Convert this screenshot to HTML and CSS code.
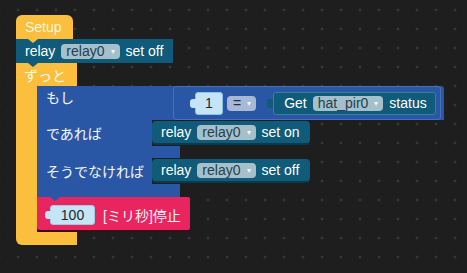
FILE: index.html
```html
<!DOCTYPE html>
<html lang="ja">
<head>
<meta charset="utf-8">
<link rel="stylesheet" href="styles.css">
</head>
<body>
<div class="workspace">
  <div class="stack">
    <div class="blk hat yellow">Setup</div>
    <div class="blk stmt teal top-relay"><span>relay</span><span class="dd">relay0<i>▾</i></span><span>set off</span></div>
    <div class="loop">
      <div class="loop-head yellow">ずっと</div>
      <div class="loop-body">
        <div class="spine yellow"></div>
        <div class="loop-inner">
          <div class="ifb">
            <div class="if-row1">
              <span class="lbl lbl-top">もし</span>
              <div class="cmp">
                <span class="num num-1">1</span>
                <span class="dd dd-blue">=<i>▾</i></span>
                <div class="get"><span>Get</span><span class="dd">hat_pir0<i>▾</i></span><span>status</span></div>
              </div>
            </div>
            <div class="if-row">
              <span class="lbl">であれば</span>
              <div class="blk stmt teal inner-relay"><span>relay</span><span class="dd">relay0<i>▾</i></span><span>set on</span></div>
            </div>
            <div class="if-bar"></div>
            <div class="if-row">
              <span class="lbl">そうでなければ</span>
              <div class="blk stmt teal inner-relay"><span>relay</span><span class="dd">relay0<i>▾</i></span><span>set off</span></div>
            </div>
            <div class="if-bar if-bar-last"></div>
          </div>
          <div class="blk pink wait"><span class="num num-100">100</span><span>[ミリ秒]停止</span></div>
        </div>
      </div>
      <div class="loop-foot yellow"></div>
    </div>
  </div>
</div>
</body>
</html>
```
FILE: styles.css
```css
html, body {
  margin: 0;
  padding: 0;
}
body {
  width: 467px;
  height: 273px;
  overflow: hidden;
  background-color: #1e1e1e;
  background-image: radial-gradient(circle, #505050 0.7px, transparent 1.3px);
  background-size: 19px 19px;
  background-position: 8.5px 0.5px;
  font-family: "Liberation Sans", "Noto Sans CJK JP", sans-serif;
  font-size: 14px;
  color: #fff;
}
.workspace {
  padding: 15px 0 0 16px;
}
.stack {
  display: flex;
  flex-direction: column;
  align-items: flex-start;
}
.yellow { background: #fbbe3d; }
.teal { background: #0f5b79; }
.pink { background: #e8255e; }

.blk {
  position: relative;
  display: flex;
  align-items: center;
  box-sizing: border-box;
  white-space: nowrap;
}
.hat {
  width: 57px;
  height: 24px;
  padding-left: 9px;
  border-radius: 6px 6px 0 0;
  color: #fff6dc;
}
.hat::after {
  content: "";
  position: absolute;
  left: 12px;
  bottom: -4px;
  border-left: 5px solid transparent;
  border-right: 5px solid transparent;
  border-top: 4px solid #fbbe3d;
  z-index: 2;
}
.stmt {
  gap: 6px;
}
.top-relay {
  height: 24px;
  padding: 0 10px 0 9px;
}
.top-relay::after {
  content: "";
  position: absolute;
  left: 12px;
  bottom: -4px;
  border-left: 5px solid transparent;
  border-right: 5px solid transparent;
  border-top: 4px solid #0f5b79;
  z-index: 2;
}
.dd {
  display: inline-flex;
  align-items: center;
  height: 15px;
  padding: 0 5px;
  gap: 6px;
  border-radius: 4px;
  background: #a6c0cb;
  color: #22414d;
  line-height: 15px;
}
.dd i {
  font-style: normal;
  font-size: 8px;
  color: #f2f6f8;
}
.dd-blue {
  background: #a9b8d4;
  color: #1f2e4a;
  padding: 0 5px 0 6px;
}

.loop {
  display: flex;
  flex-direction: column;
  align-items: flex-start;
}
.loop-head {
  width: 61px;
  height: 23px;
  box-sizing: border-box;
  padding-left: 8px;
  display: flex;
  align-items: center;
  color: #fffaf0;
}
.loop-body {
  display: flex;
}
.spine {
  width: 21px;
}
.loop-inner {
  display: flex;
  flex-direction: column;
  align-items: flex-start;
  padding-bottom: 2px;
}
.loop-foot {
  width: 61px;
  height: 13px;
  border-radius: 0 0 0 6px;
}

.ifb {
  display: flex;
  flex-direction: column;
  align-items: flex-start;
}
.if-row1 {
  width: 407px;
  height: 34px;
  box-sizing: border-box;
  display: flex;
  background: #2a57a5;
  padding-right: 3px;
  border-radius: 0 3px 0 0;
}
.lbl {
  box-sizing: border-box;
  padding-left: 9px;
  display: flex;
  align-items: center;
  color: #f4f7fc;
  white-space: nowrap;
}
.lbl-top {
  width: 136px;
  align-items: flex-start;
  padding-top: 4px;
  line-height: 16px;
}
.cmp {
  flex: 1;
  display: flex;
  align-items: center;
  box-sizing: border-box;
  border: 1px solid #4a71b6;
  border-radius: 3px;
  padding-left: 21px;
  gap: 4px;
}
.num {
  position: relative;
  display: flex;
  align-items: center;
  justify-content: center;
  background: #c5e4f6;
  color: #1d2730;
  border-radius: 3px;
  box-sizing: border-box;
}
.num::before {
  content: "";
  position: absolute;
  left: -6px;
  top: 6px;
  width: 6px;
  height: 9px;
  background: #c5e4f6;
  border-radius: 3px 0 0 3px;
}
.num-1 {
  width: 28px;
  height: 23px;
  border: 1px solid #8fc3e3;
}
.get {
  position: relative;
  margin-left: 13px;
  width: 163px;
  height: 23px;
  box-sizing: border-box;
  display: flex;
  align-items: center;
  gap: 6px;
  padding-left: 10px;
  background: #0f5b79;
  border: 1px solid #3a7f9f;
  border-radius: 3px;
  white-space: nowrap;
}
.get::before {
  content: "";
  position: absolute;
  left: -7px;
  top: 6px;
  width: 6px;
  height: 9px;
  background: #0f5b79;
  border-radius: 3px 0 0 3px;
}
.if-row {
  height: 26px;
  display: flex;
}
.if-row .lbl {
  width: 115px;
  background: #2a57a5;
}
.inner-relay {
  margin-top: 1px;
  height: 22px;
  width: 158px;
  padding: 0 9px;
  border-radius: 4px;
  box-shadow: 0 2px 0 #093a4e;
}
.if-bar {
  width: 143px;
  height: 12px;
  background: #2a57a5;
}
.if-bar-last {
  position: relative;
  height: 13px;
}
.if-bar-last::after {
  content: "";
  position: absolute;
  left: 13px;
  bottom: -4px;
  border-left: 5px solid transparent;
  border-right: 5px solid transparent;
  border-top: 4px solid #2a57a5;
  z-index: 2;
}
.wait {
  width: 153px;
  height: 33px;
  padding-left: 13px;
  gap: 8px;
  border-radius: 0 2px 2px 3px;
  box-shadow: 0 2px 0 #3a0c1a;
  color: #fff3f6;
  padding-top: 2px;
}
.num-100 {
  width: 45px;
  height: 20px;
  border: 1px solid #9ccbe6;
}
.num-100::before {
  top: 5px;
  height: 8px;
}
```
